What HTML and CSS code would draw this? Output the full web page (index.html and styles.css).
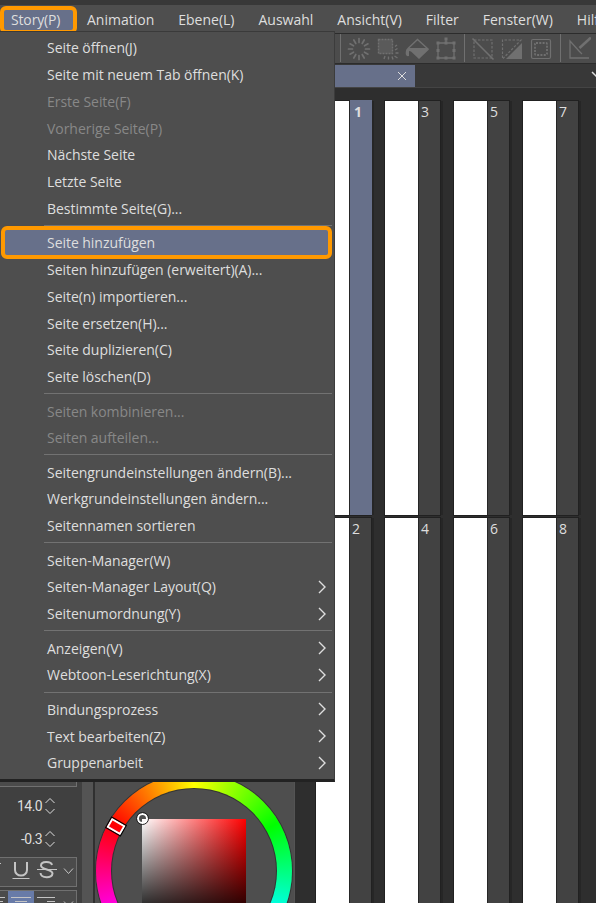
FILE: index.html
```html
<!DOCTYPE html>
<html lang="de">
<head>
  <meta charset="UTF-8">
  <title>Seiten-Manager</title>
  <link rel="stylesheet" href="styles.css">
</head>
<body>
  <div class="app">
    <nav class="menubar">
      <span class="top-item open">Story(P)</span>
      <span class="top-item">Animation</span>
      <span class="top-item">Ebene(L)</span>
      <span class="top-item">Auswahl</span>
      <span class="top-item">Ansicht(V)</span>
      <span class="top-item">Filter</span>
      <span class="top-item">Fenster(W)</span>
      <span class="top-item">Hilfe(H)</span>
    </nav>

    <div class="toolbar">
      <div class="tool-group">
        <svg class="tool" viewBox="0 0 24 24"><path stroke-width="1.7" stroke-linecap="round" d="M12 1.500v4M12 18.500v4M1.500 12h4M18.500 12h4M6.800 3l2 3.500M15.200 17.500l2 3.500M3 6.800l3.500 2M17.500 15.200l3.500 2M17.200 3l-2 3.500M8.800 17.500l-2 3.500M21 6.800l-3.500 2M6.500 15.200l-3.500 2"/></svg>
        <svg class="tool" viewBox="0 0 24 24"><rect x="2.500" y="2.500" width="14" height="14" stroke-width="1.400" stroke-dasharray="2 1" fill="#5a5a5a"/><path stroke-width="1.400" d="M19 13l2.500-1.500M19.500 16h3M18.500 19l3 2M16 19.500l1 3M12.500 19.500v3M9 19l-1 3M19 9.500l2-1.500"/></svg>
        <svg class="tool" viewBox="0 0 24 24"><path class="solid" d="M3 11h20l1 1.500L14 22 6 14.500 4 14v5c-2 .5-3.500-.5-3.300-3C.8 13 1.500 11.500 3 11z"/><path stroke-width="1.400" d="M3 11.500L12.500 2.500l10.500 9.500"/></svg>
        <svg class="tool" viewBox="0 0 24 24"><path stroke-width="1.300" d="M4 6h16v15H4zM12 6V2"/><path class="solid" d="M2.500 4.500h3v3h-3zM18.500 4.500h3v3h-3zM2.500 19.500h3v3h-3zM18.500 19.500h3v3h-3zM10.500 .5h3v3h-3zM10.500 4.500h3v3h-3zM10.500 19.500h3v3h-3zM2.500 12h3v3h-3zM18.500 12h3v3h-3z"/></svg>
      </div>
      <div class="tool-group">
        <svg class="tool" viewBox="0 0 24 24"><rect x="3" y="3" width="18" height="18" stroke-width="1.200" stroke-dasharray="2.500 1.500"/><path stroke-width="1.600" d="M1.500 1.500l21 21"/></svg>
        <svg class="tool" viewBox="0 0 24 24"><path stroke-width="1.200" stroke-dasharray="2.500 1.500" d="M2.500 21V3H21L3 21.500"/><path class="solid" d="M22 6v16H6z"/></svg>
        <svg class="tool" viewBox="0 0 24 24"><rect x="2.500" y="2.500" width="19" height="19" rx="1.500" stroke-width="1.200"/><rect x="6" y="6" width="12" height="12" rx="1" stroke-width="1.800" stroke-dasharray="2 1.300"/></svg>
      </div>
      <div class="tool-group">
        <svg class="tool" viewBox="0 0 24 24"><path stroke-width="1.300" d="M22 21H3V4l9 10 3 3"/><path stroke-width="2.600" d="M12.500 11L24 .5"/></svg>
      </div>
    </div>

    <div class="tabs">
      <div class="tab">
        <svg class="close" viewBox="0 0 10 10"><path d="M1 1l8 8M9 1L1 9"/></svg>
      </div>
      <svg class="tabs-more" viewBox="0 0 10 7"><path d="M1 1l4 4 4-4"/></svg>
    </div>

    <div class="workspace">
      <aside class="docks">
        <div class="text-dock">
          <div class="dock-edge"></div>
          <div class="spin">14.0 <svg viewBox="0 0 12 18"><path d="M1.500 6L6 1.500l4.500 4.500M1.500 12l4.500 4.500 4.500-4.500"/></svg></div>
          <div class="spin">-0.3 <svg viewBox="0 0 12 18"><path d="M1.500 6L6 1.500l4.500 4.500M1.500 12l4.500 4.500 4.500-4.500"/></svg></div>
          <div class="format-row">
            <svg viewBox="0 0 77 28">
              <path d="M0 5.500h1"/>
              <path class="bold" d="M15 4v8a6 5.500 0 0 0 12 0V4"/>
              <path d="M12.500 20.500h17"/>
              <path class="bold" d="M52 7c-1-4-11-4-11 .5 0 4.500 11.500 3.500 11.500 8 0 5-11.500 5-12-.5"/>
              <path d="M37 11.500h20M64 10.500l4.500 5 4.500-5"/>
            </svg>
          </div>
          <div class="format-row">
            <svg viewBox="0 0 77 28">
              <path class="picked" d="M8 0h26v28H8z"/>
              <path d="M0 6.500h5M0 10.500h3M11 6.500h20M15 10.500h12M37 6.500h18M47 10.500h8M64 10.500l4.500 5 4.500-5"/>
            </svg>
          </div>
        </div>
        <div class="color-dock">
          <div class="wheel">
            <div class="wheel-hole">
              <div class="shade"></div>
            </div>
            <div class="hue-mark"></div>
            <div class="shade-mark"></div>
          </div>
        </div>
      </aside>

      <main class="pages">
        <div class="page selected"><div class="paper"></div><div class="number">1</div></div>
        <div class="page"><div class="paper"></div><div class="number">3</div></div>
        <div class="page"><div class="paper"></div><div class="number">5</div></div>
        <div class="page"><div class="paper"></div><div class="number">7</div></div>
        <div class="page"><div class="paper"></div><div class="number">2</div></div>
        <div class="page"><div class="paper"></div><div class="number">4</div></div>
        <div class="page"><div class="paper"></div><div class="number">6</div></div>
        <div class="page"><div class="paper"></div><div class="number">8</div></div>
      </main>
    </div>

    <div class="menu">
      <div class="item">Seite öffnen(J)</div>
      <div class="item">Seite mit neuem Tab öffnen(K)</div>
      <div class="item disabled">Erste Seite(F)</div>
      <div class="item disabled">Vorherige Seite(P)</div>
      <div class="item">Nächste Seite</div>
      <div class="item">Letzte Seite</div>
      <div class="item">Bestimmte Seite(G)...</div>
      <div class="separator"></div>
      <div class="item active">Seite hinzufügen</div>
      <div class="item">Seiten hinzufügen (erweitert)(A)...</div>
      <div class="item">Seite(n) importieren...</div>
      <div class="item">Seite ersetzen(H)...</div>
      <div class="item">Seite duplizieren(C)</div>
      <div class="item">Seite löschen(D)</div>
      <div class="separator"></div>
      <div class="item disabled">Seiten kombinieren...</div>
      <div class="item disabled">Seiten aufteilen...</div>
      <div class="separator"></div>
      <div class="item">Seitengrundeinstellungen ändern(B)...</div>
      <div class="item">Werkgrundeinstellungen ändern...</div>
      <div class="item">Seitennamen sortieren</div>
      <div class="separator"></div>
      <div class="item">Seiten-Manager(W)</div>
      <div class="item">Seiten-Manager Layout(Q) <svg class="arrow" viewBox="0 0 8 14"><path d="M1 1l6 6-6 6"/></svg></div>
      <div class="item">Seitenumordnung(Y) <svg class="arrow" viewBox="0 0 8 14"><path d="M1 1l6 6-6 6"/></svg></div>
      <div class="separator"></div>
      <div class="item">Anzeigen(V) <svg class="arrow" viewBox="0 0 8 14"><path d="M1 1l6 6-6 6"/></svg></div>
      <div class="item">Webtoon-Leserichtung(X) <svg class="arrow" viewBox="0 0 8 14"><path d="M1 1l6 6-6 6"/></svg></div>
      <div class="separator"></div>
      <div class="item">Bindungsprozess <svg class="arrow" viewBox="0 0 8 14"><path d="M1 1l6 6-6 6"/></svg></div>
      <div class="item">Text bearbeiten(Z) <svg class="arrow" viewBox="0 0 8 14"><path d="M1 1l6 6-6 6"/></svg></div>
      <div class="item">Gruppenarbeit <svg class="arrow" viewBox="0 0 8 14"><path d="M1 1l6 6-6 6"/></svg></div>
    </div>
  </div>
</body>
</html>
```
FILE: styles.css
```css
* {
  box-sizing: border-box;
}

body {
  margin: 0;
  background: #2e2e2e;
  color: #dedede;
  font: 14px "Open Sans", "Noto Sans", sans-serif;
}

svg {
  display: block;
  fill: none;
  stroke: currentColor;
}

.app {
  position: relative;
  display: flex;
  flex-direction: column;
  width: 596px;
  height: 903px;
  overflow: hidden;
}

/* menu bar */
.menubar {
  display: flex;
  flex: none;
  height: 34px;
  border-top: 5px solid #383838;
  border-bottom: 1px solid #2c2c2c;
  background: #4e4e4e;
  white-space: nowrap;
}

.top-item {
  flex: none;
  padding: 0 12px;
  line-height: 29px;
}

.top-item.open {
  width: 77px;
  height: 28px;
  margin: 1px -2px 0 0;
  padding: 0 0 0 7px;
  border: 4px solid #ff9900;
  border-radius: 6px;
  background: #67708a;
  line-height: 19px;
  letter-spacing: -0.15px;
}

/* toolbar */
.toolbar {
  display: flex;
  flex: none;
  height: 30px;
  padding-left: 340px;
  border-bottom: 1px solid #2c2c2c;
  background: #4c4c4c;
  color: #707070;
}

.tool-group {
  display: flex;
  flex: none;
  align-items: center;
  gap: 5px;
  height: 28px;
  padding: 2px 6px 0;
  border-left: 1px solid #707070;
}

.tool-group + .tool-group {
  padding-right: 7px;
}

.tool {
  width: 24px;
  height: 24px;
}

.solid {
  fill: currentColor;
  stroke: none;
}

/* tabs */
.tabs {
  display: flex;
  flex: none;
  justify-content: space-between;
  height: 24px;
  border-bottom: 1px solid #444;
  background: #383838;
}

.tab {
  display: flex;
  align-items: center;
  justify-content: flex-end;
  width: 415px;
  height: 22px;
  margin-top: 1px;
  padding-right: 8px;
  background: #67708a;
}

.close {
  width: 10px;
  height: 10px;
}

.tabs-more {
  width: 10px;
  height: 7px;
  margin: 7px -5px 0 0;
  stroke-width: 1.5;
}

/* docks and pages */
.workspace {
  display: flex;
  flex: 1;
  min-height: 0;
}

.docks {
  display: flex;
  flex: none;
  width: 316px;
  padding-top: 682px;
  background: #2e2e2e;
}

.text-dock {
  width: 82px;
  background: #404040;
  border-right: 5px solid #404040;
}

.dock-edge {
  height: 17px;
  border: 1px solid #707070;
  border-left: 0;
  background: #4b4b4b;
}

.spin {
  display: flex;
  align-items: center;
  justify-content: flex-end;
  gap: 2px;
  height: 28px;
  margin-bottom: 4px;
  padding-right: 21px;
  font: 14px "Roboto", sans-serif;
  letter-spacing: -0.6px;
}

.dock-edge + .spin {
  height: 38px;
  margin: 0;
}

.spin svg {
  width: 12px;
  height: 18px;
}

.format-row {
  height: 30px;
  margin-bottom: 3px;
  border: 1px solid #707070;
  border-left: 0;
  background: #4b4b4b;
  color: #c4c4c4;
  overflow: hidden;
}

.format-row svg {
  width: 77px;
  height: 28px;
}

.bold {
  stroke-width: 2;
}

.picked {
  fill: #687ba8;
  stroke: none;
}

.color-dock {
  width: 213px;
  padding-left: 1px;
  border-left: 11px solid #545454;
  border-right: 1px solid #545454;
  background: #4e4e4e;
  box-shadow: inset 2px 0 #303030;
}

.wheel {
  position: relative;
  width: 196px;
  height: 196px;
  margin: 3px 0 0 2px;
  padding: 16px;
  border-radius: 50%;
  background: conic-gradient(from -60deg, red, yellow, lime, cyan, blue, magenta, red);
  box-shadow: 0 0 0 1px #333;
}

.wheel-hole {
  display: grid;
  place-items: center;
  width: 164px;
  height: 164px;
  border-radius: 50%;
  background: #4e4e4e;
  box-shadow: 0 0 0 1px #333;
}

.shade {
  width: 104px;
  height: 104px;
  background: linear-gradient(transparent, #000), linear-gradient(to right, #fff, red);
}

.hue-mark {
  position: absolute;
  left: 12px;
  top: 48px;
  width: 16px;
  height: 11px;
  border: 2px solid #fff;
  outline: 1px solid #000;
  transform: rotate(30deg);
}

.shade-mark {
  position: absolute;
  left: 41px;
  top: 40px;
  width: 11px;
  height: 11px;
  border: 2px solid #fff;
  border-radius: 50%;
  outline: 1px solid #222;
}

.pages {
  display: grid;
  grid-template-columns: repeat(4, 55px);
  grid-template-rows: 414px 414px;
  gap: 3px 14px;
  align-content: start;
  padding-top: 13px;
}

.page {
  display: flex;
  box-shadow: 0 0 0 1px #212121, 3px 0 #262626;
}

.paper {
  width: 33px;
  background: #fff;
}

.number {
  flex: 1;
  padding-left: 2px;
  border-left: 1px solid #262626;
  background: #424242;
  line-height: 22px;
}

.selected .number {
  margin: -1px -1px 0 0;
  padding-left: 4px;
  background: #67708a;
  font-weight: bold;
  line-height: 24px;
}

/* Story menu */
.menu {
  position: absolute;
  left: 0;
  top: 31px;
  width: 335px;
  height: 751px;
  padding-top: 2.5px;
  border-top: 1px solid #3a3a3a;
  border-right: 1px solid #3c3c3c;
  border-bottom: 3px solid #222;
  background: #4e4e4e;
  letter-spacing: -0.04px;
}

.item {
  display: flex;
  align-items: center;
  justify-content: space-between;
  height: 26.75px;
  padding: 0 8px 0 47px;
  white-space: nowrap;
}

.disabled {
  color: #888;
}

.active {
  height: 33px;
  margin: -3.125px 2px -3.125px 1px;
  padding-left: 42px;
  border: 4px solid #ff9900;
  border-radius: 6px;
  background: #67708a;
}

.separator {
  height: 1px;
  margin: 3.35px 2px 3.35px 44px;
  background: #727272;
}

.arrow {
  width: 8px;
  height: 14px;
  stroke-width: 1.4;
}
```
